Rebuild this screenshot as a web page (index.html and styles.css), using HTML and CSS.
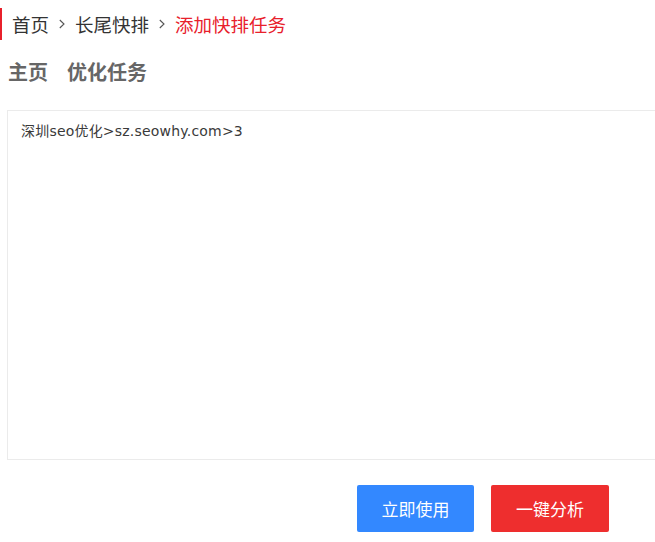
FILE: index.html
```html
<!DOCTYPE html>
<html lang="zh-CN">
<head>
<meta charset="utf-8">
<title>添加快排任务</title>
<link rel="stylesheet" href="styles.css">
</head>
<body>
<div class="page">
  <nav class="crumb">
    <span class="crumb-item">首页</span>
    <svg class="sep" width="6" height="10" viewBox="0 0 6 10"><path d="M0.8 1 L5 5 L0.8 9" fill="none" stroke="#555" stroke-width="1.1"/></svg>
    <span class="crumb-item">长尾快排</span>
    <svg class="sep" width="6" height="10" viewBox="0 0 6 10"><path d="M0.8 1 L5 5 L0.8 9" fill="none" stroke="#555" stroke-width="1.1"/></svg>
    <span class="crumb-current">添加快排任务</span>
  </nav>
  <div class="tabs">
    <span class="tab">主页</span>
    <span class="tab">优化任务</span>
  </div>
  <div class="editor">深圳seo优化&gt;sz.seowhy.com&gt;3</div>
  <div class="actions">
    <button class="btn btn-blue">立即使用</button>
    <button class="btn btn-red">一键分析</button>
  </div>
</div>
</body>
</html>
```

FILE: styles.css
```css
html, body {
  margin: 0;
  padding: 0;
  background: #fff;
  overflow: hidden;
}
.page {
  width: 655px;
  font-family: "Noto Sans CJK SC", sans-serif;
  color: #333;
}
.crumb {
  margin-top: 8px;
  height: 32px;
  border-left: 2px solid #e8202b;
  padding-left: 10px;
  display: flex;
  align-items: center;
  font-size: 18.5px;
  color: #333;
}
.sep {
  margin: 0 10px;
  display: block;
}
.crumb-current {
  color: #e8202b;
}
.tabs {
  margin-top: 16px;
  padding-left: 8px;
  height: 30px;
  display: flex;
  align-items: center;
  gap: 19px;
  font-size: 20px;
  font-weight: bold;
  color: #666;
}
.editor {
  margin-top: 24px;
  margin-left: 7px;
  width: 680px;
  height: 350px;
  border: 1px solid #ebebeb;
  padding: 10px 13px;
  box-sizing: border-box;
  font-family: "DejaVu Sans", "Noto Sans CJK SC", sans-serif;
  font-size: 14px;
  line-height: 20px;
  letter-spacing: 0.2px;
  color: #3a3a3a;
}
.actions {
  display: flex;
  justify-content: flex-end;
  gap: 17px;
  padding-right: 46px;
  margin-top: 25px;
}
.btn {
  width: 117px;
  height: 47px;
  border: none;
  border-radius: 2px;
  color: #fff;
  font-family: "Noto Sans CJK SC", sans-serif;
  font-size: 17px;
  padding: 0;
}
.btn-blue {
  background: #3388ff;
}
.btn-red {
  background: #ee2e2e;
  width: 118px;
}
```
